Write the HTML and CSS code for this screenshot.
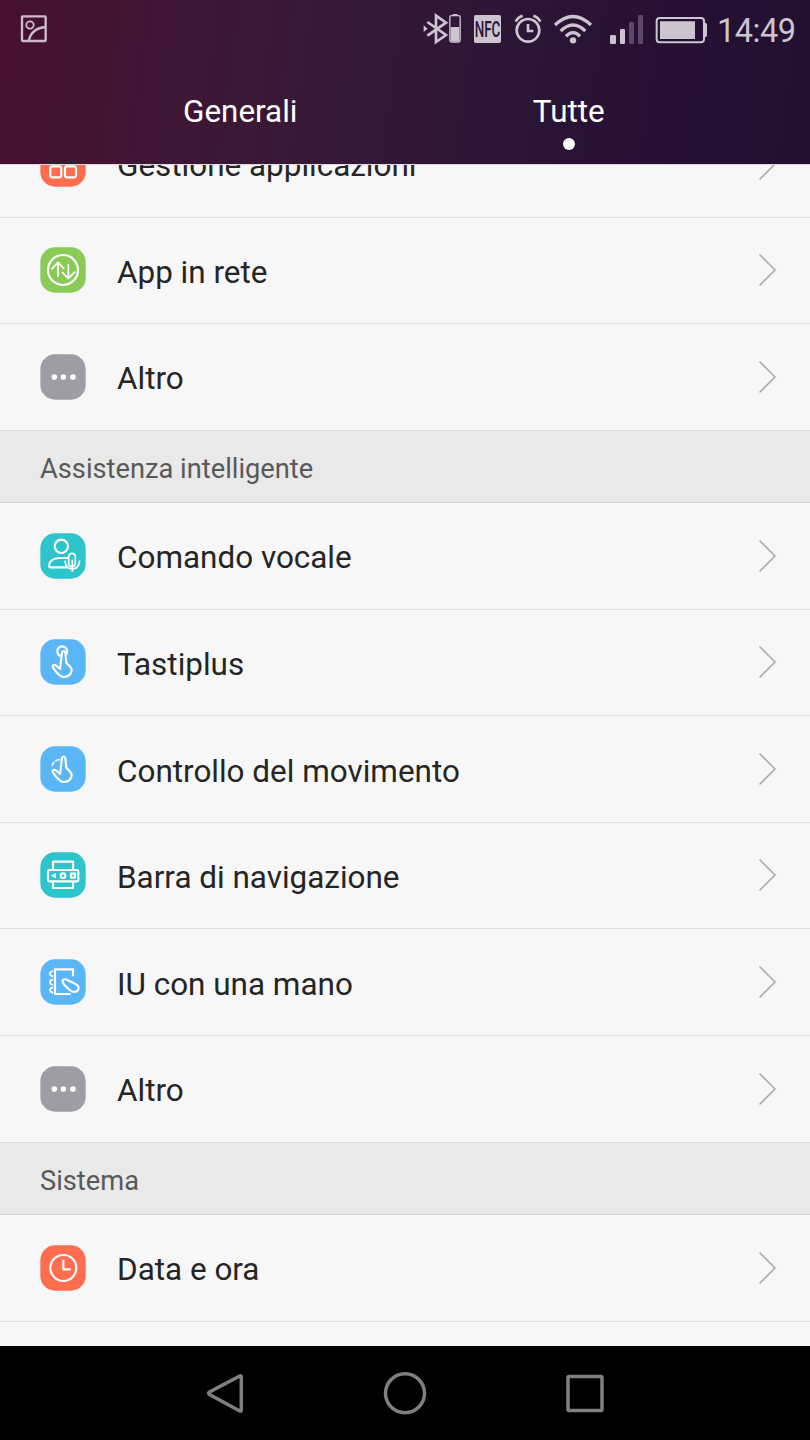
FILE: index.html
```html
<!DOCTYPE html>
<html lang="it">
<head>
<meta charset="utf-8">
<title>Impostazioni</title>
<link rel="stylesheet" href="styles.css">
</head>
<body>
<header class="header">
  <div class="status">
    <svg class="pic" viewBox="60 0 84 180"><g fill="none" stroke="#ccbdca" stroke-width="7"><rect x="66" y="49" width="71" height="74" rx="2"/><circle cx="90" cy="75" r="11" stroke-width="5.500"/><path d="M86 122C92 98 108 83 137 81"/></g></svg>
    <svg class="bt" viewBox="36 0 120 180"><g fill="none" stroke="#ccc5d0" stroke-width="8"><path d="M52 66L108 105L78 126V47L108 68L52 107"/><rect x="119.500" y="47" width="31" height="79" rx="5" stroke-width="4"/></g><path fill="#ccc5d0" d="M122 81h26v43h-26zM128 42h14v5h-14zM41 76l12 10-12 10z"/></svg>
    <svg class="nfc" viewBox="186 0 93 180"><rect x="192" y="45" width="81" height="84" rx="5" fill="#ccc5d0"/><text x="194" y="110" textLength="77" lengthAdjust="spacingAndGlyphs">NFC</text></svg>
    <svg class="alarm" viewBox="309 0 93 180"><g fill="none" stroke="#ccc5d0" stroke-width="8"><circle cx="354" cy="91" r="34"/><path d="M354 72V93H370M317 65Q323 52 338 47M370 47Q385 52 391 65"/></g></svg>
    <svg class="wifi" viewBox="426 0 126 180"><g fill="none" stroke="#ccc5d0" stroke-width="10"><path d="M435 75Q489 24 543 75M452 93Q489 57 526 93M468 109Q489 87 510 109"/></g><circle cx="489" cy="121" r="9.500" fill="#ccc5d0"/></svg>
    <svg class="signal" viewBox="24 0 111 180"><g fill="#ccc5d0"><rect x="30" y="105" width="18" height="27" rx="4"/><rect x="60" y="87" width="15" height="45" rx="4"/></g><g fill="#5d4868"><rect x="87" y="66" width="15" height="66" rx="4"/><rect x="114" y="45" width="15" height="87" rx="4"/></g></svg>
    <svg class="battery" viewBox="162 0 165 180"><rect x="170" y="54" width="142" height="73" rx="9" fill="none" stroke="#ccc5d0" stroke-width="6"/><path fill="#ccc5d0" d="M180 64h105v53H180zM312 69h5q4 0 4 5v32q0 5-4 5h-5z"/></svg>
    <span class="time">14:49</span>
  </div>
  <nav class="tabs"><span class="tab">Generali</span><span class="tab active">Tutte</span></nav>
</header>

<main class="list">
  <div class="row first">
    <svg class="icon red" viewBox="0 0 138 138"><rect class="tile" x="1" y="1" width="136" height="136" rx="44"/><g class="line"><rect x="31" y="30" width="33" height="33" rx="6"/><rect x="75" y="30" width="33" height="33" rx="6"/><rect x="31" y="76" width="33" height="33" rx="6"/><rect x="75" y="76" width="33" height="33" rx="6"/></g></svg>
    <span class="label">Gestione applicazioni</span><svg class="chevron" viewBox="0 0 20 34"><path d="M1.500 1.500L17 17L1.500 32.500"/></svg>
  </div>
  <div class="row">
    <svg class="icon green" viewBox="0 0 138 138"><rect class="tile" x="1" y="1" width="136" height="136" rx="44"/><g class="line"><circle cx="69" cy="69" r="45"/><path class="thin" d="M54 90V46M34 67L54 46L73 66M85 51V95M66 75L85 95L105 74"/></g></svg>
    <span class="label">App in rete</span><svg class="chevron" viewBox="0 0 20 34"><path d="M1.500 1.500L17 17L1.500 32.500"/></svg>
  </div>
  <div class="row">
    <svg class="icon gray" viewBox="0 0 138 138"><rect class="tile" x="1" y="1" width="136" height="136" rx="44"/><g fill="#fff"><circle cx="43" cy="69" r="8.500"/><circle cx="70" cy="69" r="8.500"/><circle cx="99" cy="69" r="8.500"/></g></svg>
    <span class="label">Altro</span><svg class="chevron" viewBox="0 0 20 34"><path d="M1.500 1.500L17 17L1.500 32.500"/></svg>
  </div>
  <h2 class="section">Assistenza intelligente</h2>
  <div class="row">
    <svg class="icon teal" viewBox="0 0 138 138"><rect class="tile" x="1" y="1" width="136" height="136" rx="44"/><g class="line"><circle cx="64" cy="40" r="20"/><path d="M84 75H56Q28 78 27 98Q27 103 32 103H82"/><g class="thin"><rect x="86" y="61" width="20" height="40" rx="10"/><path d="M75 83Q77 108 97 108Q116 108 119 83M97 80V116"/></g></g></svg>
    <span class="label">Comando vocale</span><svg class="chevron" viewBox="0 0 20 34"><path d="M1.500 1.500L17 17L1.500 32.500"/></svg>
  </div>
  <div class="row">
    <svg class="icon blue" viewBox="0 0 138 138"><rect class="tile" x="1" y="1" width="136" height="136" rx="44"/><g class="line"><path d="M61 51A15 15 0 1 1 76 49"/><path d="M66 40L60 90L46 78C39 76 36 80 39 86C49 98 57 114 72 114C86 114 95 104 95 93C95 84 86 78 79 72L76 40Q71 33 66 40Z"/></g></svg>
    <span class="label">Tastiplus</span><svg class="chevron" viewBox="0 0 20 34"><path d="M1.500 1.500L17 17L1.500 32.500"/></svg>
  </div>
  <div class="row">
    <svg class="icon blue" viewBox="0 0 138 138"><rect class="tile" x="1" y="1" width="136" height="136" rx="44"/><g class="line"><path d="M66 36L60 84L46 72C39 70 36 74 39 80C49 92 57 108 72 108C86 108 95 98 95 87C95 78 86 72 79 66L76 36Q71 27 66 36Z"/><path class="thin" d="M36 59Q38 53 43 48M46 45Q52 41 59 40"/></g></svg>
    <span class="label">Controllo del movimento</span><svg class="chevron" viewBox="0 0 20 34"><path d="M1.500 1.500L17 17L1.500 32.500"/></svg>
  </div>
  <div class="row">
    <svg class="icon teal" viewBox="0 0 138 138"><rect class="tile" x="1" y="1" width="136" height="136" rx="44"/><g class="line"><path d="M39 52V29H99V52M39 90V108H99V90"/><rect x="24" y="54" width="91" height="34" rx="5"/><circle cx="69" cy="71" r="7"/><rect x="93" y="65" width="12" height="12"/></g><path d="M32 71L47 63V79Z" fill="#fff"/></svg>
    <span class="label">Barra di navigazione</span><svg class="chevron" viewBox="0 0 20 34"><path d="M1.500 1.500L17 17L1.500 32.500"/></svg>
  </div>
  <div class="row">
    <svg class="icon blue" viewBox="0 0 138 138"><rect class="tile" x="1" y="1" width="136" height="136" rx="44"/><g class="line"><path d="M99 52V31H45V105H92"/><path d="M70 62C64 67 71 74 75 80L89 93C98 101 112 100 115 91C118 83 112 77 102 73L82 63Q74 59 70 62Z"/><path class="thin" d="M39 36Q30 37 30 44Q30 51 39 52M39 62Q30 63 30 70Q30 77 39 78M39 86Q30 87 30 93Q30 100 39 101"/></g></svg>
    <span class="label">IU con una mano</span><svg class="chevron" viewBox="0 0 20 34"><path d="M1.500 1.500L17 17L1.500 32.500"/></svg>
  </div>
  <div class="row">
    <svg class="icon gray" viewBox="0 0 138 138"><rect class="tile" x="1" y="1" width="136" height="136" rx="44"/><g fill="#fff"><circle cx="43" cy="69" r="8.500"/><circle cx="70" cy="69" r="8.500"/><circle cx="99" cy="69" r="8.500"/></g></svg>
    <span class="label">Altro</span><svg class="chevron" viewBox="0 0 20 34"><path d="M1.500 1.500L17 17L1.500 32.500"/></svg>
  </div>
  <h2 class="section">Sistema</h2>
  <div class="row">
    <svg class="icon red" viewBox="0 0 138 138"><rect class="tile" x="1" y="1" width="136" height="136" rx="44"/><g class="line"><circle cx="70" cy="69" r="39"/><path d="M70 44V73H92"/></g></svg>
    <span class="label">Data e ora</span><svg class="chevron" viewBox="0 0 20 34"><path d="M1.500 1.500L17 17L1.500 32.500"/></svg>
  </div>
</main>

<footer class="navbar">
  <svg viewBox="0 0 50 50"><path d="M39.800 8Q41.300 7.200 41.300 9V42Q41.300 43.800 39.800 43L9.500 26.500Q7.800 25.300 9.500 24Z"/></svg>
  <svg viewBox="0 0 50 50"><circle cx="25" cy="25.300" r="19.500"/></svg>
  <svg viewBox="0 0 50 50"><rect x="8" y="8.500" width="34" height="34" rx="1"/></svg>
</footer>
</body>
</html>
```
FILE: styles.css
```css
* { box-sizing: border-box; }
body {
  margin: 0;
  width: 810px;
  height: 1440px;
  display: flex;
  flex-direction: column;
  overflow: hidden;
  background: #f7f7f7;
  font-family: Roboto, "Noto Sans", sans-serif;
}
svg { display: block; flex: none; }

.header {
  flex: none;
  height: 164px;
  color: #fff;
  background: linear-gradient(98deg, #48102f 0%, #3e1634 22%, #351937 42%, #2a1535 66%, #251034 83%, #211030 100%);
  box-shadow: 0 1px #e0d5e0;
  z-index: 1;
}
.status { display: flex; height: 60px; padding-left: 20px; }
.status svg { height: 60px; }
.pic { width: 28px; margin-right: 374px; }
.bt { width: 40px; margin-right: 10px; }
.nfc { width: 31px; margin-right: 10px; }
.nfc text { font-size: 64px; font-weight: 500; fill: #2a1638; }
.alarm { width: 31px; margin-right: 8px; }
.wifi { width: 42px; margin-right: 14px; }
.signal { width: 37px; margin-right: 9px; }
.battery { width: 55px; margin-right: 8px; }
.time { font-size: 32.5px; letter-spacing: -0.5px; line-height: 62px; color: #ccc5d0; white-space: nowrap; }

.tabs { display: flex; padding: 0 77px 0 76px; }
.tab {
  flex: 1;
  display: flex;
  flex-direction: column;
  align-items: center;
  padding-top: 32px;
  font-size: 31.4px;
  line-height: 40px;
}
.active::after {
  content: "";
  width: 12px;
  height: 12px;
  margin-top: 6px;
  border-radius: 50%;
  background: #fff;
}

.list { flex: 1; min-height: 0; overflow: hidden; background: #f7f7f7; }
.row {
  display: flex;
  align-items: center;
  height: 106.61px;
  padding: 0 32px 0 40px;
  border-bottom: 1px solid #dedede;
}
.first { margin-top: -53.11px; }
.icon { width: 46px; height: 46px; margin: 0 31px 0.4px 0; }
.red { fill: #ff6d50; }
.green { fill: #8acb57; }
.gray { fill: #9d9ea5; }
.teal { fill: #2ec4cb; }
.blue { fill: #5bb6f8; }
.line { fill: none; stroke: #fff; stroke-width: 6.5; stroke-linejoin: round; }
.thin { stroke-width: 5; }
.label { flex: 1; padding-top: 5px; font-size: 31.45px; line-height: 40px; color: #252525; }
.chevron { width: 20px; height: 34px; margin-bottom: 0.4px; fill: none; stroke: #b0b0b0; stroke-width: 1.7; }
.section {
  margin: 0;
  height: 72.3px;
  padding: 2px 40px 0;
  border-bottom: 1px solid #d6d6d6;
  background: #e9e9e9;
  font-size: 27.25px;
  font-weight: 400;
  line-height: 72px;
  color: #595959;
}

.navbar {
  flex: none;
  height: 94px;
  display: flex;
  align-items: center;
  justify-content: center;
  gap: 130px;
  background: #000;
}
.navbar svg { width: 50px; height: 50px; fill: none; stroke: #808080; stroke-width: 3.5; }
```
